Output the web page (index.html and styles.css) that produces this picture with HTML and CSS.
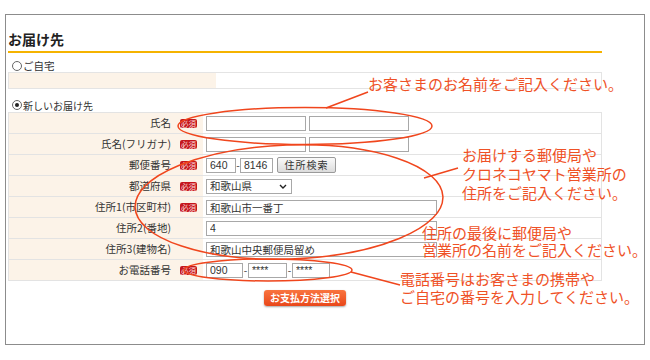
FILE: index.html
```html
<!DOCTYPE html>
<html lang="ja">
<head>
  <meta charset="UTF-8" />
  <title>お届け先</title>
  <link rel="stylesheet" href="styles.css">
</head>
<body>
  <div class="frame">
    <h2>お届け先</h2>

    <label class="option"><span class="radio"></span>ご自宅</label>
    <div class="home-row">
      <div class="home-label"></div>
      <div class="home-value"></div>
    </div>

    <label class="option option-new"><span class="radio checked"></span>新しいお届け先</label>

    <div class="form-table">
      <div class="row">
        <div class="label"><span>氏名</span><span class="req">必須</span></div>
        <div class="value">
          <input class="w100" type="text">
          <input class="w100" type="text">
        </div>
      </div>
      <div class="row">
        <div class="label"><span>氏名(フリガナ)</span><span class="req">必須</span></div>
        <div class="value">
          <input class="w100" type="text">
          <input class="w100" type="text">
        </div>
      </div>
      <div class="row">
        <div class="label"><span>郵便番号</span><span class="req">必須</span></div>
        <div class="value tight">
          <input class="zip1" type="text" value="640">
          <span class="dash">-</span>
          <input class="zip2" type="text" value="8146">
          <button class="zip-btn" type="button">住所検索</button>
        </div>
      </div>
      <div class="row">
        <div class="label"><span>都道府県</span><span class="req">必須</span></div>
        <div class="value">
          <span class="select-wrap">
            <select>
              <option>和歌山県</option>
            </select>
            <svg class="chev" width="8" height="5" viewBox="0 0 8 5">
              <path d="M1 1 L4 4 L7 1" fill="none" stroke="#222" stroke-width="1.4"/>
            </svg>
          </span>
        </div>
      </div>
      <div class="row">
        <div class="label"><span>住所1(市区町村)</span><span class="req">必須</span></div>
        <div class="value">
          <input class="addr" type="text" value="和歌山市一番丁">
        </div>
      </div>
      <div class="row">
        <div class="label"><span>住所2(番地)</span><span></span></div>
        <div class="value">
          <input class="addr" type="text" value="4">
        </div>
      </div>
      <div class="row">
        <div class="label"><span>住所3(建物名)</span><span></span></div>
        <div class="value">
          <input class="addr" type="text" value="和歌山中央郵便局留め">
        </div>
      </div>
      <div class="row">
        <div class="label"><span>お電話番号</span><span class="req">必須</span></div>
        <div class="value tight">
          <input class="tel1" type="text" value="090">
          <span class="dash tel-dash">-</span>
          <input class="tel2" type="text" value="****">
          <span class="dash tel-dash">-</span>
          <input class="tel3" type="text" value="****">
        </div>
      </div>
    </div>

    <div class="actions">
      <button class="pay-btn" type="button">お支払方法選択</button>
    </div>
  </div>

  <!-- hand-drawn callouts over the form -->
  <svg class="marks" width="650" height="360" viewBox="0 0 650 360">
    <g fill="none" stroke="#f0461d" stroke-width="1.5">
      <ellipse cx="305" cy="126" rx="127" ry="18.5"/>
      <line x1="326" y1="108" x2="368" y2="92"/>
      <ellipse cx="289" cy="202" rx="154" ry="57" transform="rotate(-2 289 202)"/>
      <line x1="424" y1="178" x2="458" y2="168"/>
      <ellipse cx="268" cy="270" rx="84" ry="11"/>
      <line x1="351" y1="272" x2="400" y2="285"/>
    </g>
  </svg>

  <div class="note note-name">お客さまのお名前をご記入ください。</div>
  <div class="note note-office">お届けする郵便局や<br>クロネコヤマト営業所の<br>住所をご記入ください。</div>
  <div class="note note-last">住所の最後に郵便局や<br>営業所の名前をご記入ください。</div>
  <div class="note note-tel">電話番号はお客さまの携帯や<br>ご自宅の番号を入力してください。</div>
</body>
</html>
```

FILE: styles.css
```css
* {
  box-sizing: border-box;
}

body {
  margin: 0;
  font-family: "Noto Sans CJK JP", sans-serif;
  color: #333;
  background: #fff;
}

.frame {
  width: 640px;
  height: 331px;
  margin: 14px 0 0 5px;
  padding: 0 42px 0 2px;
  border: 1px solid #8c8c8c;
}

h2 {
  margin: 0;
  padding: 14px 0 2px;
  font-size: 14px;
  line-height: 20px;
  font-weight: bold;
  color: #222;
  border-bottom: 2px solid #f5b300;
}

.option {
  display: flex;
  align-items: center;
  height: 13px;
  margin-top: 6px;
  padding-left: 4px;
  font-size: 10.5px;
  line-height: 13px;
  color: #333;
}

.option-new {
  height: 14px;
  margin-top: 9px;
  font-size: 10px;
}

.radio {
  display: flex;
  align-items: center;
  justify-content: center;
  width: 10px;
  height: 10px;
  margin-right: 1px;
  border: 1px solid #666;
  border-radius: 50%;
}

.radio.checked::after {
  content: "";
  width: 4px;
  height: 4px;
  border-radius: 50%;
  background: #222;
}

.home-row {
  display: flex;
  height: 17px;
  border: 1px solid #e4e4e4;
}

.home-label {
  width: 207px;
  background: #fcf3e8;
}

.form-table {
  border: 1px solid #e3e3e3;
  border-bottom: none;
}

.row {
  display: flex;
  height: 21px;
  border-bottom: 1px solid #e3e3e3;
}

.label {
  display: grid;
  grid-template-columns: 1fr 17px;
  column-gap: 9px;
  align-items: center;
  width: 194px;
  padding-right: 6px;
  background: #fcf3e8;
  text-align: right;
  font-size: 10.5px;
  line-height: 12px;
  color: #333;
}

.req {
  height: 9px;
  border-radius: 2px;
  background: #c4161c;
  color: #fbd6d6;
  font-size: 7.5px;
  line-height: 9px;
  text-align: center;
}

.value {
  flex: 1;
  display: flex;
  align-items: center;
  gap: 3px;
  padding-left: 3px;
}

.value.tight {
  gap: 0;
}

.value input,
.value select {
  height: 15px;
  margin: 0;
  padding: 0 3px;
  border: 1px solid #a8a8a8;
  background: #fff;
  font-family: "Liberation Sans", "Noto Sans CJK JP", sans-serif;
  font-size: 10.5px;
  color: #333;
  outline: none;
}

.w100 { width: 100px; }
.zip1 { width: 30px; }
.zip2 { width: 33px; }
.addr { width: 231px; }
.tel1 { width: 37px; }
.tel2 { width: 39px; }
.tel3 { width: 38px; }

.dash {
  width: 4px;
  font-size: 10px;
  line-height: 10px;
  text-align: center;
  color: #333;
}

.tel-dash {
  width: 5px;
}

.zip-btn {
  width: 59px;
  height: 16px;
  margin-left: 4px;
  padding: 0;
  border: 1px solid #9a9a9a;
  border-radius: 2px;
  background: linear-gradient(#fafafa, #dcdcdc);
  font-family: "Noto Sans CJK JP", sans-serif;
  font-size: 10px;
  line-height: 14px;
  letter-spacing: 1px;
  color: #333;
}

.select-wrap {
  position: relative;
  display: flex;
}

.select-wrap select {
  width: 86px;
  appearance: none;
  -webkit-appearance: none;
  border-radius: 0;
}

.chev {
  position: absolute;
  right: 5px;
  top: 5px;
  pointer-events: none;
}

.actions {
  display: flex;
  justify-content: center;
  margin-top: 9px;
}

.pay-btn {
  width: 82px;
  height: 16px;
  padding: 0;
  border: none;
  border-radius: 3px;
  background: linear-gradient(#f9743f, #e9471a);
  box-shadow: 0 1px 2px rgba(0, 0, 0, 0.35);
  font-family: "Noto Sans CJK JP", sans-serif;
  font-size: 10px;
  font-weight: bold;
  line-height: 16px;
  color: #fff;
}

.marks {
  position: absolute;
  left: 0;
  top: 0;
  pointer-events: none;
}

.note {
  position: absolute;
  font-size: 15px;
  line-height: 17px;
  color: #ef5126;
  white-space: nowrap;
}

.note-name { left: 368px; top: 75px; }
.note-office { left: 462px; top: 145px; line-height: 19px; }
.note-last { left: 422px; top: 224px; }
.note-tel { left: 400px; top: 270px; line-height: 18px; }
```
